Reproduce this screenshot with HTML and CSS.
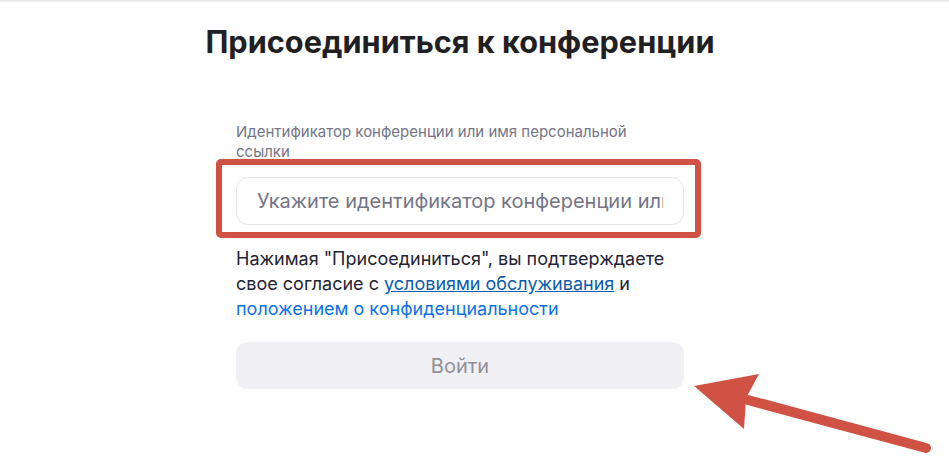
FILE: index.html
```html
<!DOCTYPE html>
<html lang="ru">
<head>
<meta charset="utf-8">
<title>Присоединиться к конференции</title>
<link rel="stylesheet" href="styles.css">
</head>
<body>
<div class="topline"></div>
<main class="page">
  <h1 class="title">Присоединиться к конференции</h1>
  <form class="form">
    <label class="label" for="mid">Идентификатор конференции или имя персональной ссылки</label>
    <div class="field">
      <input id="mid" class="input" type="text" placeholder="Укажите идентификатор конференции или имя персональной ссылки">
      <div class="highlight"></div>
    </div>
    <p class="terms">Нажимая "Присоединиться", вы подтверждаете свое согласие с <a class="link-terms" href="#">условиями обслуживания</a> и <a class="link-privacy" href="#">положением о конфиденциальности</a></p>
    <button class="join" type="button">Войти</button>
  </form>
</main>
<svg class="arrow" width="949" height="464" viewBox="0 0 949 464">
  <line x1="926" y1="448" x2="748" y2="400" stroke="#d05244" stroke-width="10" stroke-linecap="round"/>
  <polygon points="694,386 759,374 746,398 744,429" fill="#d05244"/>
</svg>
</body>
</html>
```

FILE: styles.css
```css
html, body {
  margin: 0;
  padding: 0;
  background: #ffffff;
  font-family: Inter, "Liberation Sans", Arial, sans-serif;
}

.topline {
  height: 2px;
  background: linear-gradient(#e2e2e2, #f6f6f6);
}

.page {
  width: 560px;
  margin-left: 180px;
  display: flex;
  flex-direction: column;
  align-items: center;
}

.title {
  margin: 20px 0 0;
  font-size: 30.7px;
  line-height: 40px;
  font-weight: 700;
  color: #1f1f24;
  white-space: nowrap;
}

.form {
  width: 448px;
  margin-top: 60px;
  display: flex;
  flex-direction: column;
}

.label {
  max-width: 430px;
  font-size: 15px;
  line-height: 20px;
  color: #747487;
}

.field {
  position: relative;
  margin-top: 15px;
}

.input {
  display: block;
  box-sizing: border-box;
  width: 100%;
  height: 48px;
  padding: 0 20px;
  border: 1px solid #e5e5ea;
  border-radius: 12px;
  font-family: inherit;
  font-size: 20px;
  color: #232333;
  background: #fff;
  outline: none;
}

.input::placeholder {
  color: #747487;
}

.highlight {
  position: absolute;
  top: -18px;
  left: -20px;
  right: -17px;
  bottom: -13px;
  border: 6px solid #d05244;
  border-radius: 5px;
  pointer-events: none;
}

.terms {
  margin: 21px 0 0;
  font-size: 18px;
  line-height: 25px;
  color: #232333;
}

.link-terms {
  color: #0b5cad;
  text-decoration: underline;
}

.link-privacy {
  color: #0e71eb;
  text-decoration: none;
}

.join {
  margin-top: 21px;
  height: 47px;
  border: none;
  border-radius: 12px;
  background: #efeff4;
  color: #909096;
  font-family: inherit;
  font-size: 20px;
}

.arrow {
  position: absolute;
  left: 0;
  top: 0;
  pointer-events: none;
}
```
